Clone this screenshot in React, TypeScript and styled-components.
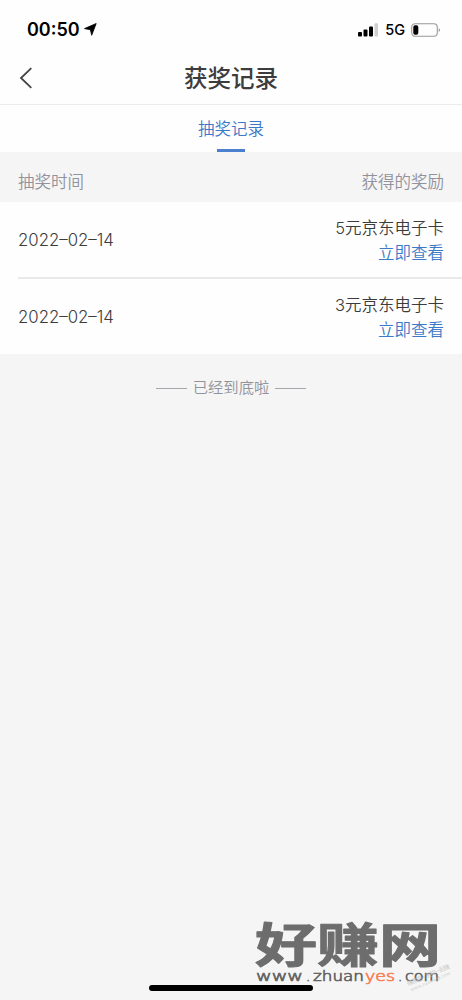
import styled, { createGlobalStyle } from 'styled-components';

const GlobalStyle = createGlobalStyle`
  * {
    box-sizing: border-box;
  }

  body {
    margin: 0;
    background: #f5f5f5;
    font-family: Inter, 'Noto Sans CJK SC', sans-serif;
    font-weight: 350;
    color: #3c3c3c;
  }
`;

const Page = styled.div`
  position: relative;
  height: 1000px;
  overflow: hidden;
  background: #f5f5f5;
`;

const StatusBar = styled.div`
  display: flex;
  align-items: center;
  justify-content: space-between;
  height: 52px;
  padding: 7px 21px 0 27px;
  background: #fefefe;
  color: #000;
`;

const Clock = styled.div`
  display: flex;
  align-items: center;
  gap: 4px;
  font-size: 18px;
  font-weight: 600;
  line-height: 22px;
`;

const StatusIcons = styled.div`
  display: flex;
  align-items: center;
`;

const Network = styled.span`
  margin: 0 6px;
  font-size: 14.5px;
  font-weight: 500;
  line-height: 20px;
`;

const NavBar = styled.header`
  display: grid;
  grid-template-columns: 60px 1fr 60px;
  align-items: center;
  height: 53px;
  border-bottom: 1px solid #ececec;
  background: #fefefe;
`;

const BackButton = styled.button`
  display: flex;
  padding: 0 0 0 19px;
  border: 0;
  background: none;
  color: #444;
`;

const Title = styled.h1`
  margin: 0;
  padding-top: 1px;
  font-size: 23.5px;
  font-weight: 500;
  line-height: 34px;
  text-align: center;
  color: #3c3c3c;
`;

const Tabs = styled.nav`
  display: flex;
  justify-content: center;
  height: 47px;
  background: #fefefe;
`;

const Tab = styled.div`
  display: flex;
  flex-direction: column;
  align-items: center;
  justify-content: space-between;
  padding-top: 12px;
  font-size: 16.5px;
  line-height: 24px;
  color: #3c79c8;

  &::after {
    content: '';
    width: 28px;
    height: 3px;
    background: #4a80ce;
  }
`;

const ListHeader = styled.div`
  display: flex;
  align-items: center;
  justify-content: space-between;
  height: 50px;
  padding: 10px 18px 0;
  font-size: 16.5px;
  line-height: 24px;
  color: #91929d;
`;

const List = styled.div`
  padding-left: 18px;
  background: #fefefe;
`;

const Row = styled.div`
  display: flex;
  align-items: center;
  justify-content: space-between;
  height: 75px;
  padding-right: 18px;

  & + & {
    height: 77px;
    border-top: 2px solid #e9e9e9;
  }
`;

const DrawDate = styled.span`
  font-size: 16.8px;
  line-height: 24px;
`;

const Prize = styled.div`
  display: flex;
  flex-direction: column;
  align-items: flex-end;
  padding-top: 2px;
  font-size: 16.5px;
  line-height: 25px;
`;

const ViewLink = styled.a`
  color: #3c79c8;
`;

const ListEnd = styled.div`
  display: flex;
  align-items: center;
  justify-content: center;
  gap: 6px;
  padding-top: 22px;
  font-size: 15.3px;
  line-height: 24px;
  color: #91929b;

  &::before,
  &::after {
    content: '';
    width: 31px;
    height: 1px;
    background: #a5a5ab;
  }
`;

const HomeIndicator = styled.div`
  position: absolute;
  left: 149px;
  bottom: 9px;
  width: 164px;
  height: 6px;
  border-radius: 3px;
  background: #000;
`;

const Watermark = styled.svg`
  position: absolute;
  right: 0;
  bottom: 0;
`;

const records = [
  { date: '2022–02–14', prize: '5元京东电子卡' },
  { date: '2022–02–14', prize: '3元京东电子卡' },
];

function LocationIcon() {
  return (
    <svg width="13" height="13" viewBox="0 0 13 13">
      <path d="M12.2.5 7.7 12.3 6.4 6.8.5 5.6Z" fill="#000" stroke="#000" strokeWidth=".8" strokeLinejoin="round" />
    </svg>
  );
}

function SignalIcon() {
  return (
    <svg width="21" height="14" viewBox="0 0 21 14">
      <rect x="0" y="9" width="4" height="4.5" rx="1" />
      <rect x="5.5" y="6.5" width="4" height="7" rx="1" />
      <rect x="11" y="3.5" width="4" height="10" rx="1" />
      <rect x="16.5" y=".3" width="3.5" height="13.2" rx="1" fill="#cfcfcf" />
    </svg>
  );
}

function BatteryIcon() {
  return (
    <svg width="30" height="14" viewBox="0 0 30 14">
      <rect x=".7" y=".7" width="25.6" height="12.6" rx="3.5" fill="none" stroke="#999" strokeWidth="1.1" />
      <rect x="2.3" y="2.2" width="5" height="9.6" rx="1.8" />
      <path d="M27.7 5.2c1.8.5 1.8 3.1 0 3.6Z" fill="#999" />
    </svg>
  );
}

function SiteWatermark() {
  return (
    <Watermark width="222" height="90" viewBox="0 0 222 90">
      <g
        fill="#6d6d6d"
        stroke="#6d6d6d"
        strokeWidth="1"
        strokeLinejoin="round"
        fontFamily="'Noto Sans CJK SC', sans-serif"
        fontSize="47"
        fontWeight="700"
      >
        <text x="15" y="52" textLength="186" lengthAdjust="spacingAndGlyphs">好赚网</text>
      </g>
      <g fill="#666" fontFamily="'DejaVu Sans', sans-serif" fontSize="13.5" stroke="#666" strokeWidth=".7">
        <text x="16" y="71" textLength="47" lengthAdjust="spacingAndGlyphs">www</text>
        <text x="66" y="71">.</text>
        <text x="73" y="71" textLength="51" lengthAdjust="spacingAndGlyphs">zhuan</text>
        <text x="125" y="71" textLength="30" lengthAdjust="spacingAndGlyphs" fill="#fa7f58" stroke="#fa7f58">yes</text>
        <text x="158" y="71">.</text>
        <text x="165" y="71" textLength="34" lengthAdjust="spacingAndGlyphs">com</text>
      </g>
      <g
        transform="translate(168 76) rotate(-23)"
        fill="#c8c8c8"
        fontFamily="'Noto Sans CJK SC', sans-serif"
        fontSize="6"
      >
        <text x="0" y="0" textLength="46">赚客吧·有奖一起赚</text>
        <text x="1" y="6" fontSize="4.5" textLength="43">www.zuanke8.com</text>
      </g>
    </Watermark>
  );
}

export default function App() {
  return (
    <Page>
      <GlobalStyle />
      <StatusBar>
        <Clock>
          00:50
          <LocationIcon />
        </Clock>
        <StatusIcons>
          <SignalIcon />
          <Network>5G</Network>
          <BatteryIcon />
        </StatusIcons>
      </StatusBar>
      <NavBar>
        <BackButton>
          <svg width="14" height="22" viewBox="0 0 14 22" fill="none" stroke="currentColor" strokeWidth="1.8">
            <path d="M12.3 1.2 2 11l10.3 9.8" />
          </svg>
        </BackButton>
        <Title>获奖记录</Title>
      </NavBar>
      <Tabs>
        <Tab>抽奖记录</Tab>
      </Tabs>
      <ListHeader>
        <span>抽奖时间</span>
        <span>获得的奖励</span>
      </ListHeader>
      <List>
        {records.map((record) => (
          <Row key={record.prize}>
            <DrawDate>{record.date}</DrawDate>
            <Prize>
              <span>{record.prize}</span>
              <ViewLink>立即查看</ViewLink>
            </Prize>
          </Row>
        ))}
      </List>
      <ListEnd>已经到底啦</ListEnd>
      <HomeIndicator />
      <SiteWatermark />
    </Page>
  );
}
